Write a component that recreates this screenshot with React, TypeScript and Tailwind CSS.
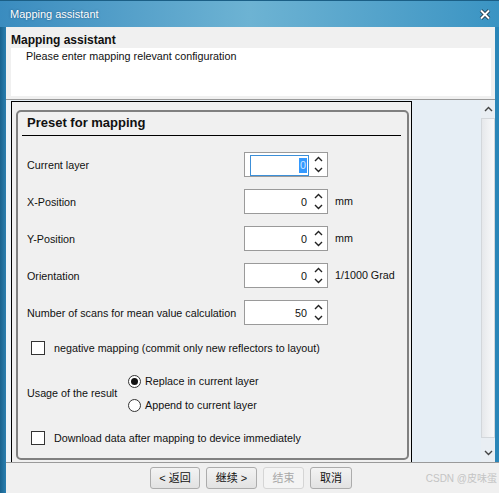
import React from 'react';

const Chevron = ({ up, color = '#222' }: { up?: boolean; color?: string }) => (
  <svg width="9" height="6" viewBox="0 0 9 6">
    <path
      d={up ? 'M1 5 L4.5 1.5 L8 5' : 'M1 1 L4.5 4.5 L8 1'}
      fill="none"
      stroke={color}
      strokeWidth="1.4"
    />
  </svg>
);

const Spinner = ({ value, focused }: { value: string; focused?: boolean }) => (
  <div className="flex h-[25px] w-[84px] shrink-0 border border-[#9a9a9a] bg-white">
    <div
      className={`ml-[5px] mt-[2px] flex w-[59px] items-center justify-end pr-[1px] border ${
        focused ? 'border-[#3c8fd8]' : 'border-transparent'
      }`}
    >
      {focused ? (
        <span className="bg-[#3399ff] px-[1px] leading-[15px] text-[#cfe6ff]">{value}</span>
      ) : (
        <span>{value}</span>
      )}
    </div>
    <div className="flex flex-1 flex-col items-center justify-center gap-[5px] pl-[1px]">
      <Chevron up />
      <Chevron />
    </div>
  </div>
);

const Checkbox = () => (
  <div className="h-[14px] w-[14px] shrink-0 border border-[#333] bg-white" />
);

const Radio = ({ checked }: { checked?: boolean }) => (
  <div className="flex h-[13px] w-[13px] shrink-0 items-center justify-center rounded-full border border-[#333] bg-white">
    {checked && <div className="h-[7px] w-[7px] rounded-full bg-[#111]" />}
  </div>
);

const FieldRow = ({
  label,
  value,
  unit,
  focused,
}: {
  label: string;
  value: string;
  unit?: string;
  focused?: boolean;
}) => (
  <div className="flex h-[25px] items-center">
    <div className="w-[226px] shrink-0 pl-[9px] pt-[2px]">{label}</div>
    <Spinner value={value} focused={focused} />
    {unit && <div className="ml-[7px]">{unit}</div>}
  </div>
);

const WizardButton = ({
  children,
  width,
  disabled,
}: {
  children: React.ReactNode;
  width: string;
  disabled?: boolean;
}) => (
  <button
    className={`${width} h-[22px] rounded-[3px] border text-[11px] ${
      disabled
        ? 'border-[#d5d5d5] bg-[#f4f4f4] text-[#a8a8a8]'
        : 'border-[#acacac] bg-gradient-to-b from-[#f3f3f3] to-[#e2e2e2] text-[#111]'
    }`}
  >
    {children}
  </button>
);

export default function App() {
  return (
    <div className="relative flex h-[493px] w-[499px] flex-col overflow-hidden font-['Liberation_Sans','Noto_Sans_CJK_SC',sans-serif] text-[10.75px] text-[#111]">
      {/* Title bar */}
      <div className="flex h-[27px] shrink-0 items-center justify-between border-t border-[#1b5f86] bg-gradient-to-r from-[#3a8cbf] via-[#6db3d3] to-[#3a94c3] pl-[10px] pr-[8px]">
        <span className="text-[11px] text-white [text-shadow:0_0_2px_rgba(0,40,80,0.6)]">
          Mapping assistant
        </span>
        <svg width="12" height="11" viewBox="0 0 12 11">
          <path d="M2 1.5 L10 9.5 M10 1.5 L2 9.5" stroke="#1a2a3a" strokeWidth="3.6" />
          <path d="M2 1.5 L10 9.5 M10 1.5 L2 9.5" stroke="#fff" strokeWidth="2" />
        </svg>
      </div>

      <div className="flex flex-1">
        {/* left window border */}
        <div className="w-[6px] shrink-0 bg-gradient-to-r from-[#18628e] to-[#2a7fb0]" />

        <div className="flex flex-1 flex-col">
          <div className="flex">
            <div className="flex flex-1 flex-col">
              {/* Header */}
              <div className="h-[73px] border-b border-[#9a9a9a] bg-[#f0f0f0] pt-[6px]">
                <div className="pl-[5px] text-[12px] font-bold leading-[14px]">Mapping assistant</div>
                <div className="ml-[5px] mr-[4px] mt-[1px] h-[48px] bg-white pl-[15px] pt-[1px] leading-[14px]">
                  Please enter mapping relevant configuration
                </div>
              </div>

              {/* Scroll content */}
              <div className="flex h-[362px] bg-[#e6eef5]">
                <div className="w-[5px] shrink-0 bg-[#eef3f8]" />
                <div className="mt-[1px] w-[401px] shrink-0 border-x border-t border-black bg-[#f0f0f0] pl-[4px] pr-[2px] pt-[8px]">
                  <div className="flex h-[350px] flex-col rounded-[5px] border-2 border-[#808080]">
                    <div className="h-[23px] pl-[9px] pt-[2px] text-[13px] font-bold leading-[17px]">
                      Preset for mapping
                    </div>
                    <div className="ml-[4px] mr-[6px] border-t border-black" />

                    <div className="mt-[16px] flex flex-col gap-[12px]">
                      <FieldRow label="Current layer" value="0" focused />
                      <FieldRow label="X-Position" value="0" unit="mm" />
                      <FieldRow label="Y-Position" value="0" unit="mm" />
                      <FieldRow label="Orientation" value="0" unit="1/1000 Grad" />
                      <FieldRow label="Number of scans for mean value calculation" value="50" />
                    </div>

                    <div className="mt-[16px] flex h-[14px] items-center pl-[13px]">
                      <Checkbox />
                      <span className="ml-[9px]">negative mapping (commit only new reflectors to layout)</span>
                    </div>

                    <div className="mt-[16px] flex items-center">
                      <div className="w-[110px] shrink-0 pl-[9px]">Usage of the result</div>
                      <div className="flex flex-col gap-[4px]">
                        <div className="flex h-[20px] items-center">
                          <Radio checked />
                          <span className="ml-[4px]">Replace in current layer</span>
                        </div>
                        <div className="flex h-[20px] items-center">
                          <Radio />
                          <span className="ml-[4px]">Append to current layer</span>
                        </div>
                      </div>
                    </div>

                    <div className="mt-[16px] flex h-[14px] items-center pl-[13px]">
                      <Checkbox />
                      <span className="ml-[9px]">Download data after mapping to device immediately</span>
                    </div>
                  </div>
                </div>
                <div className="flex-1" />
                {/* Scrollbar */}
                <div className="flex w-[14px] shrink-0 flex-col bg-[#e9eef3]">
                  <div className="flex h-[18px] items-center justify-center">
                    <Chevron up color="#444" />
                  </div>
                  <div className="h-[320px] border border-[#d3d7db] bg-gradient-to-r from-[#e6e8eb] to-[#f8f9fa]" />
                  <div className="flex flex-1 items-center justify-center pt-[6px]">
                    <Chevron color="#444" />
                  </div>
                </div>
              </div>
            </div>
            {/* right window border */}
            <div className="w-[4px] shrink-0 bg-[#2a86b8]" />
          </div>

          {/* Button bar */}
          <div className="flex flex-1 justify-center gap-[6px] border-t border-[#9a9a9a] bg-[#f0f0f0] pt-[4px] pr-[3px]">
            <WizardButton width="w-[50px]">&lt; 返回</WizardButton>
            <WizardButton width="w-[51px]">继续 &gt;</WizardButton>
            <WizardButton width="w-[41px]" disabled>
              结束
            </WizardButton>
            <WizardButton width="w-[42px]">取消</WizardButton>
          </div>
        </div>
      </div>

      <div className="absolute bottom-[7px] right-[2px] text-[10px] text-[#c4c4c4]">CSDN @皮味蛋</div>
    </div>
  );
}
